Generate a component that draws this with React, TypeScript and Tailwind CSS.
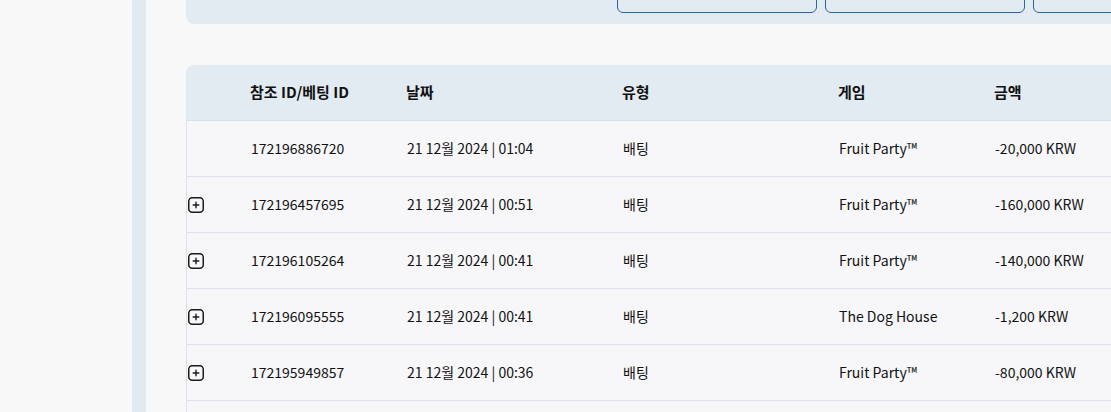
import React from "react";

type Bet = {
  id: string;
  date: string;
  time: string;
  type: string;
  game: string;
  amount: string;
  expandable: boolean;
};

const BETS: Bet[] = [
  { id: "172196886720", date: "21 12월 2024", time: "01:04", type: "배팅", game: "Fruit Party™", amount: "-20,000 KRW", expandable: false },
  { id: "172196457695", date: "21 12월 2024", time: "00:51", type: "배팅", game: "Fruit Party™", amount: "-160,000 KRW", expandable: true },
  { id: "172196105264", date: "21 12월 2024", time: "00:41", type: "배팅", game: "Fruit Party™", amount: "-140,000 KRW", expandable: true },
  { id: "172196095555", date: "21 12월 2024", time: "00:41", type: "배팅", game: "The Dog House", amount: "-1,200 KRW", expandable: true },
  { id: "172195949857", date: "21 12월 2024", time: "00:36", type: "배팅", game: "Fruit Party™", amount: "-80,000 KRW", expandable: true },
];

const COLS = "grid grid-cols-[49px_156px_216px_216px_156px_1fr]";

const PlusBox = () => (
  <svg width="16" height="16" viewBox="0 0 16 16" fill="none">
    <rect x="0.75" y="0.75" width="14.5" height="14.5" rx="3.5" stroke="#1a1a1a" strokeWidth="1.5" />
    <path d="M8 5.2v5.6M5.2 8h5.6" stroke="#1a1a1a" strokeWidth="1.4" strokeLinecap="round" />
  </svg>
);

const App = () => {
  return (
    <div
      className="h-[412px] w-[1111px] overflow-hidden flex bg-[#f8f8f8] text-[#111]"
      style={{ fontFamily: '"Noto Sans CJK KR", "Noto Sans", sans-serif' }}
    >
      {/* Left panel */}
      <div className="w-[132px] shrink-0 bg-[#f8f8f8]" />
      <div className="w-[14px] shrink-0 bg-[#e1e9f1]" />

      {/* Main */}
      <div className="flex-1 overflow-hidden pl-[40px]">
        {/* Filter card (scrolled) */}
        <div className="w-[1000px] h-[64px] mt-[-40px] bg-[#e2eaf2] rounded-b-lg flex items-end pb-[11px] pl-[431px] gap-[8px]">
          <button className="w-[200px] h-[44px] shrink-0 rounded-md border border-[#2d64a0]" />
          <button className="w-[200px] h-[44px] shrink-0 rounded-md border border-[#2d64a0]" />
          <button className="w-[200px] h-[44px] shrink-0 rounded-md border border-[#2d64a0]" />
        </div>

        {/* Table */}
        <div className="w-[1000px] mt-[41px] text-[14px]">
          <div className={`${COLS} h-[56px] items-center bg-[#e2eaf2] rounded-tl-lg border-b border-[#d8e0e8] font-bold text-[15px]`}>
            <div />
            <div className="pl-[15px]">참조 ID/베팅 ID</div>
            <div className="pl-[15px]">날짜</div>
            <div className="pl-[15px]">유형</div>
            <div className="pl-[15px]">게임</div>
            <div className="pl-[15px]">금액</div>
          </div>
          {BETS.map((b) => (
            <div
              key={b.id}
              className={`${COLS} h-[56px] items-center bg-[#f7f7f9] border-b border-l border-[#dde2ea]`}
            >
              <div className="flex items-center pl-px">{b.expandable && <PlusBox />}</div>
              <div className="pl-[15px]">{b.id}</div>
              <div className="pl-[15px]">
                {b.date} | {b.time}
              </div>
              <div className="pl-[15px]">{b.type}</div>
              <div className="pl-[15px]">{b.game}</div>
              <div className="pl-[15px]">{b.amount}</div>
            </div>
          ))}
          <div className="h-[56px] bg-[#f7f7f9] border-l border-[#dde2ea]" />
        </div>
      </div>
    </div>
  );
};

export default App;
